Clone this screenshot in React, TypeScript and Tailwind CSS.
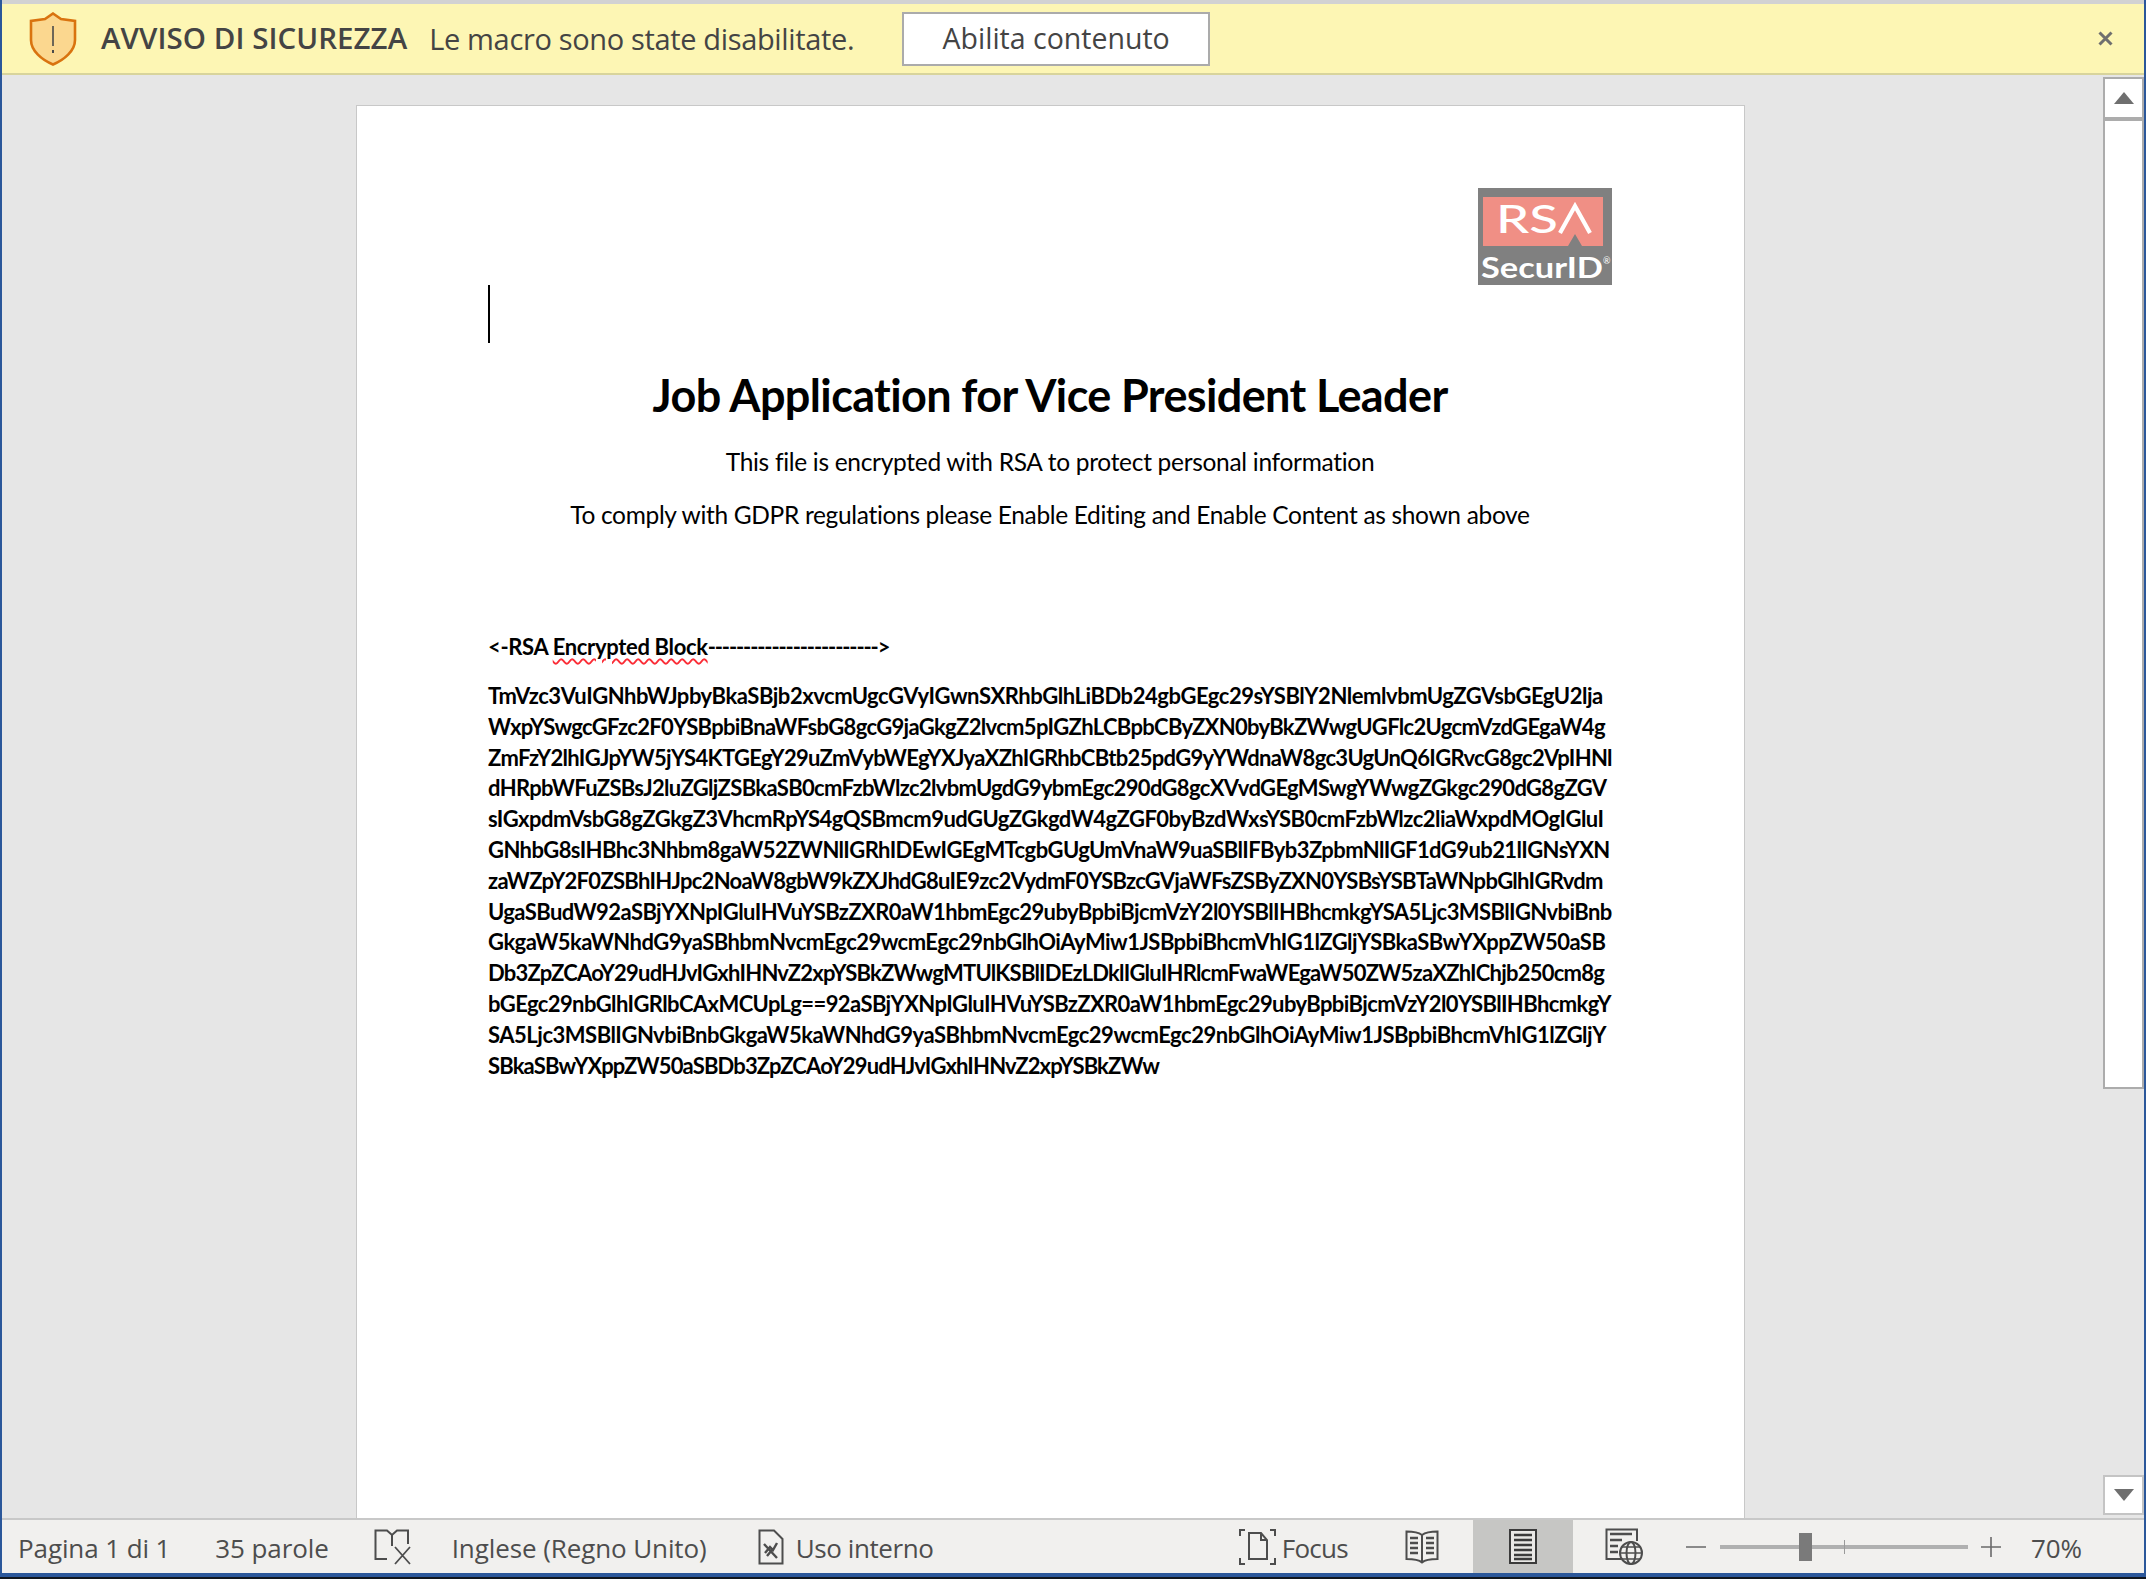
const bodyFont = "font-['Lato','Liberation_Sans',sans-serif]";
const uiFont = "font-['Open_Sans','Noto_Sans',sans-serif]";

// tracking per riga: Lato non ha le stesse larghezze del font originale
const BLOCK_LINES = [
  { text: "TmVzc3VuIGNhbWJpbyBkaSBjb2xvcmUgcGVyIGwnSXRhbGlhLiBDb24gbGEgc29sYSBlY2NlemlvbmUgZGVsbGEgU2lja", tracking: "tracking-[-0.45px]" },
  { text: "WxpYSwgcGFzc2F0YSBpbiBnaWFsbG8gcG9jaGkgZ2lvcm5pIGZhLCBpbCByZXN0byBkZWwgUGFlc2UgcmVzdGEgaW4g", tracking: "tracking-[-0.67px]" },
  { text: "ZmFzY2lhIGJpYW5jYS4KTGEgY29uZmVybWEgYXJyaXZhIGRhbCBtb25pdG9yYWdnaW8gc3UgUnQ6IGRvcG8gc2VpIHNl", tracking: "tracking-[-0.67px]" },
  { text: "dHRpbWFuZSBsJ2luZGljZSBkaSB0cmFzbWlzc2lvbmUgdG9ybmEgc290dG8gcXVvdGEgMSwgYWwgZGkgc290dG8gZGV", tracking: "tracking-[-0.66px]" },
  { text: "sIGxpdmVsbG8gZGkgZ3VhcmRpYS4gQSBmcm9udGUgZGkgdW4gZGF0byBzdWxsYSB0cmFzbWlzc2liaWxpdMOgIGluI", tracking: "tracking-[-0.53px]" },
  { text: "GNhbG8sIHBhc3Nhbm8gaW52ZWNlIGRhIDEwIGEgMTcgbGUgUmVnaW9uaSBlIFByb3ZpbmNlIGF1dG9ub21lIGNsYXN", tracking: "tracking-[-0.58px]" },
  { text: "zaWZpY2F0ZSBhIHJpc2NoaW8gbW9kZXJhdG8uIE9zc2VydmF0YSBzcGVjaWFsZSByZXN0YSBsYSBTaWNpbGlhIGRvdm", tracking: "tracking-[-0.71px]" },
  { text: "UgaSBudW92aSBjYXNpIGluIHVuYSBzZXR0aW1hbmEgc29ubyBpbiBjcmVzY2l0YSBlIHBhcmkgYSA5Ljc3MSBlIGNvbiBnb", tracking: "tracking-[-0.57px]" },
  { text: "GkgaW5kaWNhdG9yaSBhbmNvcmEgc29wcmEgc29nbGlhOiAyMiw1JSBpbiBhcmVhIG1lZGljYSBkaSBwYXppZW50aSB", tracking: "tracking-[-0.54px]" },
  { text: "Db3ZpZCAoY29udHJvIGxhIHNvZ2xpYSBkZWwgMTUlKSBlIDEzLDklIGluIHRlcmFwaWEgaW50ZW5zaXZhIChjb250cm8g", tracking: "tracking-[-0.77px]" },
  { text: "bGEgc29nbGlhIGRlbCAxMCUpLg==92aSBjYXNpIGluIHVuYSBzZXR0aW1hbmEgc29ubyBpbiBjcmVzY2l0YSBlIHBhcmkgY", tracking: "tracking-[-0.6px]" },
  { text: "SA5Ljc3MSBlIGNvbiBnbGkgaW5kaWNhdG9yaSBhbmNvcmEgc29wcmEgc29nbGlhOiAyMiw1JSBpbiBhcmVhIG1lZGljY", tracking: "tracking-[-0.48px]" },
  { text: "SBkaSBwYXppZW50aSBDb3ZpZCAoY29udHJvIGxhIHNvZ2xpYSBkZWw", tracking: "tracking-[-0.85px]" },
];

function ShieldIcon() {
  return (
    <svg width="50" height="54" viewBox="0 0 50 54" fill="none">
      <path
        d="M25 1.5 L33 7 L47 9 V28 C47 39 36 48 25 52.5 C14 48 3 39 3 28 V9 L17 7 Z"
        fill="#fbd78f"
        stroke="#d9730f"
        strokeWidth="2.6"
      />
      <path d="M25 14 V34" stroke="#4a4a4a" strokeWidth="1.6" />
      <path d="M25 38 V41" stroke="#4a4a4a" strokeWidth="2" />
    </svg>
  );
}

function RsaLogo() {
  return (
    <svg width="134" height="97" viewBox="0 0 134 97" className="block">
      <rect width="134" height="97" fill="#808080" />
      <path d="M5 9 H125 V58 H104 L97 46 L90 58 H5 Z" fill="#f08f85" />
      <text
        x="18"
        y="45"
        fill="#fff"
        fontFamily="Lato, sans-serif"
        fontSize="38"
        fontWeight="500"
        textLength="62"
        lengthAdjust="spacingAndGlyphs"
      >
        RS
      </text>
      <path d="M82 45 L97 18 L112 45" fill="none" stroke="#fff" strokeWidth="4.2" />
      <text
        x="3"
        y="90"
        fill="#fff"
        fontFamily="Lato, sans-serif"
        fontSize="29"
        fontWeight="700"
        textLength="122"
        lengthAdjust="spacingAndGlyphs"
      >
        SecurID
      </text>
      <text x="125" y="76" fill="#fff" fontFamily="Lato, sans-serif" fontSize="9">
        ®
      </text>
    </svg>
  );
}

function ProofIcon() {
  return (
    <svg width="38" height="36" viewBox="0 0 38 36" fill="none" stroke="#4d4d4d" strokeWidth="2">
      <path d="M13 30 H1.5 V1.5 H13 L18 6 L23 1.5 H34 V15" />
      <path d="M18 6 V17" />
      <path d="M21 18 L36 35 M36 18 L21 35" strokeWidth="1.8" />
    </svg>
  );
}

function LabelIcon() {
  return (
    <svg width="26" height="36" viewBox="0 0 26 36" fill="none" stroke="#4d4d4d" strokeWidth="2">
      <path d="M1.5 1.5 H16 L24.5 10 V34.5 H1.5 Z" />
      <path d="M6 15 L19 29 M7 24 L12 18 L15 21 L19 14 M9 27 L14 21" strokeWidth="2.4" />
    </svg>
  );
}

function FocusIcon() {
  return (
    <svg width="37" height="36" viewBox="0 0 37 36" fill="none" stroke="#4d4d4d" strokeWidth="2">
      <path d="M1 7 V1 H6 M31 1 H36 V7 M36 29 V35 H31 M6 35 H1 V29" />
      <path d="M10 4 H22 L28 11 V30 H10 Z" />
      <path d="M22 4 V11 H28" />
    </svg>
  );
}

function ReadIcon() {
  return (
    <svg width="34" height="34" viewBox="0 0 34 34" fill="none" stroke="#4d4d4d" strokeWidth="2">
      <path d="M17 5 C13 2 7 1.5 1.5 1.5 V29 C7 29 13 29 17 32.5 C21 29 27 29 32.5 29 V1.5 C27 1.5 21 2 17 5 Z" />
      <path d="M17 5 V32" />
      <path d="M5 8 H13 M5 13 H13 M5 18 H13 M5 23 H13 M21 8 H29 M21 13 H29 M21 18 H29 M21 23 H29" strokeWidth="2.4" />
    </svg>
  );
}

function PrintIcon() {
  return (
    <svg width="28" height="35" viewBox="0 0 28 35" fill="#e9e8e6" stroke="#3b3b3b" strokeWidth="2">
      <rect x="1" y="1" width="26" height="33" />
      <path d="M5 6 H23 M5 11 H23 M5 16 H23 M5 21 H23 M5 26 H23 M5 30 H23" strokeWidth="2.4" />
    </svg>
  );
}

function WebIcon() {
  return (
    <svg width="38" height="37" viewBox="0 0 38 37" fill="none" stroke="#4d4d4d" strokeWidth="2">
      <path d="M16 31 H1.5 V1.5 H32 V13" />
      <path d="M5 6 H27 M5 12 H17 M5 18 H13 M5 24 H13" strokeWidth="2.4" />
      <circle cx="26" cy="25" r="11" fill="#f1f0ee" />
      <ellipse cx="26" cy="25" rx="4.5" ry="11" />
      <path d="M15 25 H37 M17 19 H35 M17 31 H35" strokeWidth="1.6" />
    </svg>
  );
}

function ZoomSlider() {
  return (
    <div className="relative ml-[14px] h-[28px] w-[248px]">
      <div className="mt-[12px] h-[4px] bg-[#b0b0b0]" />
      <div className="absolute left-[124px] top-[7px] h-[14px] w-px bg-[#9a9a9a]" />
      <div className="absolute left-[79px] top-0 h-[28px] w-[13px] bg-[#7a7a7a]" />
    </div>
  );
}

function SecurityBar() {
  return (
    <div className={`flex h-[71px] shrink-0 items-center border-b-2 border-[#d8d49c] bg-[#fdf6b4] text-[#444] ${uiFont}`}>
      <div className="ml-[26px] shrink-0">
        <ShieldIcon />
      </div>
      <span className="ml-[23px] whitespace-nowrap text-[29.5px] font-semibold tracking-[0.05px]">AVVISO DI SICUREZZA</span>
      <span className="ml-[22px] whitespace-nowrap text-[29px] tracking-[-0.35px]">Le macro sono state disabilitate.</span>
      <button className="ml-[48px] flex h-[54px] w-[308px] items-center justify-center border-2 border-[#ababab] bg-white text-[28.5px]">
        Abilita contenuto
      </button>
      <svg width="15" height="15" viewBox="0 0 15 15" className="ml-auto mr-[31px]" stroke="#6f6f6f" strokeWidth="3">
        <path d="M1.5 1.5 L13.5 13.5 M13.5 1.5 L1.5 13.5" />
      </svg>
    </div>
  );
}

function DocumentPage() {
  return (
    <div className={`ml-[354px] mt-[30px] w-[1389px] shrink-0 border-x border-t border-[#c8c8c8] bg-white pl-[131px] pr-[132px] pt-[82px] text-black ${bodyFont}`}>
      <div className="flex justify-end">
        <RsaLogo />
      </div>
      <div className="h-[58px] w-[2px] bg-black" />
      <h1 className="mt-[24px] whitespace-nowrap text-center text-[45px] font-bold leading-[56px] tracking-[-0.63px]">
        Job Application for Vice President Leader
      </h1>
      <p className="mt-[23px] whitespace-nowrap text-center text-[24.5px] leading-[32px] tracking-[-0.3px]">
        This file is encrypted with RSA to protect personal information
      </p>
      <p className="mt-[21px] whitespace-nowrap text-center text-[24.5px] leading-[32px] tracking-[-0.33px]">
        To comply with GDPR regulations please Enable Editing and Enable Content as shown above
      </p>
      <p className="mt-[101px] whitespace-nowrap text-[22px] font-bold leading-[30px] tracking-[-0.34px]">
        {"<-RSA "}
        <span className="underline decoration-red-500 decoration-wavy decoration-[1.5px] underline-offset-[3px]">Encrypted Block</span>
        <span className="tracking-[-1.12px]">{"------------------------>"}</span>
      </p>
      <div className="mt-[19px] text-[22px] font-bold leading-[30.8px]">
        {BLOCK_LINES.map((line) => (
          <div key={line.text} className={`whitespace-nowrap ${line.tracking}`}>
            {line.text}
          </div>
        ))}
      </div>
    </div>
  );
}

function Scrollbar() {
  return (
    <div className="my-[2px] mb-[3px] flex w-[41px] shrink-0 flex-col">
      <button className="flex h-[40px] shrink-0 items-center justify-center border-2 border-b-0 border-[#acacac] bg-white">
        <svg width="20" height="12" viewBox="0 0 20 12" fill="#6f6f6f">
          <path d="M10 0 L20 12 H0 Z" />
        </svg>
      </button>
      <div className="h-[972px] shrink-0 border-x-2 border-[#acacac] border-t-[4px] border-b-2 bg-white" />
      <div className="flex-1" />
      <button className="flex h-[40px] shrink-0 items-center justify-center border-2 border-[#c4c4c4] bg-white">
        <svg width="20" height="12" viewBox="0 0 20 12" fill="#6f6f6f">
          <path d="M0 0 H20 L10 12 Z" />
        </svg>
      </button>
    </div>
  );
}

function StatusBar() {
  return (
    <div className={`flex h-[55px] shrink-0 items-center border-t-2 border-[#c8c8c8] bg-[#f1f0ee] text-[26px] tracking-[-0.1px] text-[#4d4d4d] ${uiFont}`}>
      <span className="ml-[16px] whitespace-nowrap pt-[3px]">Pagina 1 di 1</span>
      <span className="ml-[45px] whitespace-nowrap pt-[3px]">35 parole</span>
      <div className="ml-[45px] flex">
        <ProofIcon />
      </div>
      <span className="ml-[40px] whitespace-nowrap pt-[3px]">Inglese (Regno Unito)</span>
      <div className="ml-[51px] flex">
        <LabelIcon />
      </div>
      <span className="ml-[12px] whitespace-nowrap pt-[3px] tracking-[-0.4px]">Uso interno</span>
      <div className="ml-auto flex">
        <FocusIcon />
      </div>
      <span className="ml-[6px] pt-[3px] tracking-[-0.7px]">Focus</span>
      <div className="ml-[57px] flex">
        <ReadIcon />
      </div>
      <div className="ml-[34px] flex h-full w-[100px] items-center justify-center bg-[#c6c6c4]">
        <PrintIcon />
      </div>
      <div className="ml-[32px] flex">
        <WebIcon />
      </div>
      <div className="ml-[43px] h-[2px] w-[20px] bg-[#8a8a8a]" />
      <ZoomSlider />
      <svg width="20" height="20" viewBox="0 0 20 20" className="ml-[13px]" stroke="#6a6a6a" strokeWidth="1.6">
        <path d="M10 0 V20 M0 10 H20" />
      </svg>
      <span className="ml-[30px] mr-[62px] pt-[3px]">70%</span>
    </div>
  );
}

export default function App() {
  return (
    <div className="flex h-[1579px] w-[2146px] flex-col overflow-hidden bg-[#11161d]">
      <div className="flex min-h-0 flex-1 flex-col border-x-2 border-[#2b579a]">
        <div className="h-[4px] shrink-0 bg-[#d2d2d2]" />
        <SecurityBar />
        <div className="flex min-h-0 flex-1 bg-[#e6e6e6]">
          <div className="flex min-w-0 flex-1 overflow-hidden">
            <DocumentPage />
          </div>
          <Scrollbar />
        </div>
        <StatusBar />
      </div>
      <div className="h-[4px] shrink-0 bg-[#2b579a]" />
      <div className="h-[2px] shrink-0" />
    </div>
  );
}
